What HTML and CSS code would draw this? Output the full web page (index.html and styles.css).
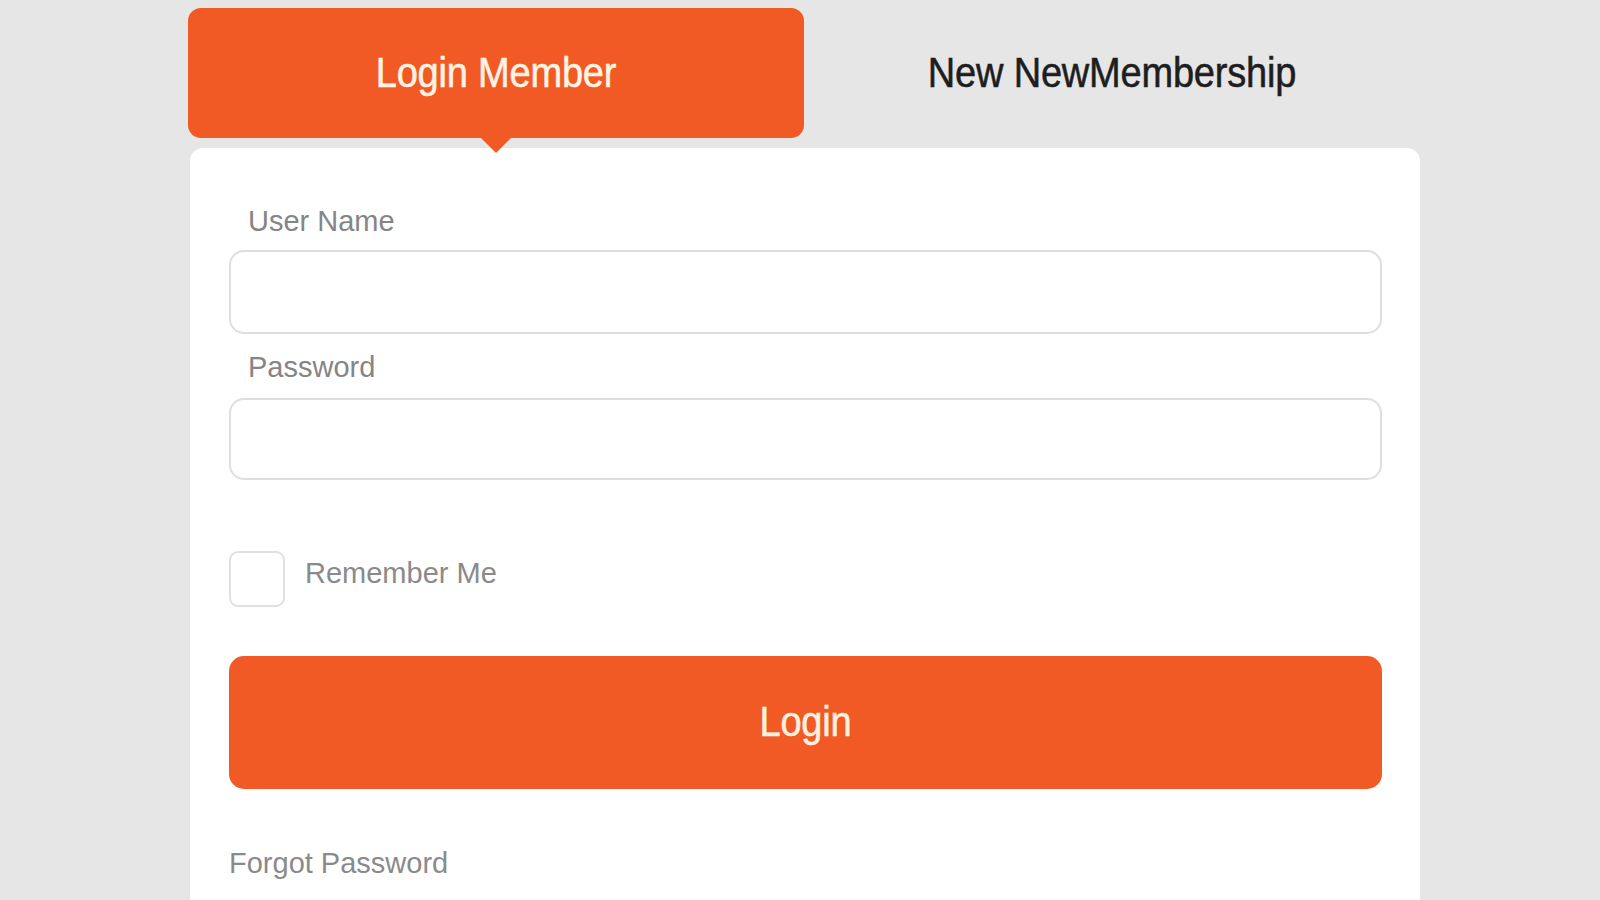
FILE: index.html
```html
<!DOCTYPE html>
<html lang="en">
<head>
<meta charset="utf-8">
<title>Login Member</title>
<link rel="stylesheet" href="styles.css">
</head>
<body>
<div class="page">
  <div class="tabs">
    <div class="tab tab-active"><span class="tall">Login Member</span></div>
    <div class="tab"><span class="tall">New NewMembership</span></div>
  </div>
  <div class="card">
    <label class="label" for="user">User Name</label>
    <input class="field" id="user" type="text">
    <label class="label label-pass" for="pass">Password</label>
    <input class="field field-pass" id="pass" type="password">
    <div class="remember">
      <input class="check" type="checkbox" id="rem">
      <label class="remember-text" for="rem">Remember Me</label>
    </div>
    <button class="login-btn" type="button"><span class="tall">Login</span></button>
    <a class="forgot" href="#">Forgot Password</a>
  </div>
</div>
</body>
</html>
```
FILE: styles.css
```css
html, body {
  margin: 0;
  padding: 0;
  background: #e6e6e6;
  font-family: "Liberation Sans", Arial, sans-serif;
  overflow: hidden;
}

.page {
  width: 1232px;
  margin: 8px 0 0 188px;
}

.tabs {
  display: grid;
  grid-template-columns: 616px 616px;
  height: 130px;
}

.tab {
  position: relative;
  display: flex;
  align-items: center;
  justify-content: center;
  font-size: 38px;
  color: #1e1e1e;
  padding-bottom: 2px;
  box-sizing: border-box;
}

.tall {
  display: inline-block;
  transform: scaleY(1.12);
  letter-spacing: -0.2px;
  -webkit-text-stroke: 0.5px currentColor;
}

.tab-active {
  background: #f15a24;
  color: #fff3e4;
  border-radius: 13px;
}

.tab-active::after {
  content: "";
  position: absolute;
  left: 50%;
  bottom: -15px;
  margin-left: -15px;
  border-left: 15px solid transparent;
  border-right: 15px solid transparent;
  border-top: 15px solid #f15a24;
}

.card {
  margin: 10px 0 0 2px;
  width: 1230px;
  height: 752px;
  background: #ffffff;
  border-radius: 13px 13px 0 0;
  box-sizing: border-box;
  padding: 55px 38px 0 39px;
  display: flex;
  flex-direction: column;
}

.label {
  display: block;
  font-size: 29px;
  line-height: 36px;
  color: #858585;
  padding-left: 19px;
  margin-bottom: 11px;
}

.label-pass {
  margin-top: 15px;
  margin-bottom: 13px;
}

.field {
  display: block;
  width: 100%;
  height: 84px;
  box-sizing: border-box;
  border: 2px solid #dedede;
  border-radius: 15px;
  background: #ffffff;
  margin: 0;
  outline: none;
}

.field-pass {
  height: 82px;
}

.remember {
  display: flex;
  align-items: center;
  margin-top: 71px;
  height: 56px;
}

.check {
  appearance: none;
  -webkit-appearance: none;
  width: 56px;
  height: 56px;
  margin: 0;
  box-sizing: border-box;
  border: 2px solid #e0e0e0;
  border-radius: 9px;
  background: #ffffff;
}

.remember-text {
  margin-left: 20px;
  font-size: 29px;
  line-height: 36px;
  color: #8a8a8a;
  position: relative;
  top: -6px;
}

.login-btn {
  margin-top: 49px;
  height: 133px;
  width: 100%;
  border: none;
  border-radius: 15px;
  background: #f15a24;
  color: #fff1e0;
  font-family: "Liberation Sans", Arial, sans-serif;
  font-size: 38px;
  padding: 0;
  cursor: pointer;
}

.forgot {
  margin-top: 56px;
  font-size: 29px;
  line-height: 36px;
  color: #8a8a8a;
  text-decoration: none;
  align-self: flex-start;
}
```
